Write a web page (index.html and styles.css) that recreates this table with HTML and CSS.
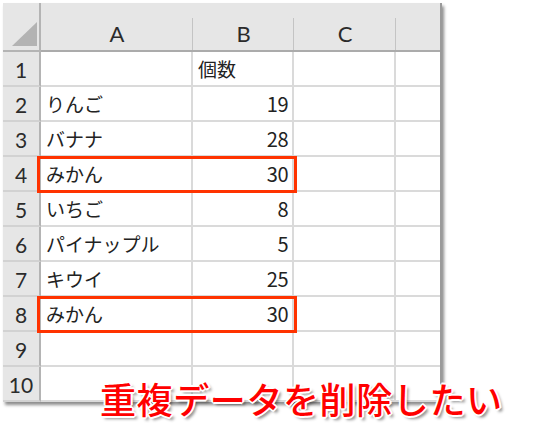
FILE: index.html
```html
<!DOCTYPE html>
<html lang="ja">
<head>
<meta charset="utf-8">
<link rel="stylesheet" href="styles.css">
</head>
<body>
<div class="page">
  <div class="sheet">
    <div class="corner"><span class="tri"></span></div>
    <div class="colh">A</div>
    <div class="colh">B</div>
    <div class="colh">C</div>
    <div class="colh last"></div>

    <div class="rowh">1</div><div class="cell"></div><div class="cell txt">個数</div><div class="cell"></div><div class="cell last"></div>
    <div class="rowh">2</div><div class="cell txt">りんご</div><div class="cell num">19</div><div class="cell"></div><div class="cell last"></div>
    <div class="rowh">3</div><div class="cell txt">バナナ</div><div class="cell num">28</div><div class="cell"></div><div class="cell last"></div>
    <div class="rowh">4</div><div class="cell txt">みかん</div><div class="cell num">30</div><div class="cell"></div><div class="cell last"></div>
    <div class="rowh">5</div><div class="cell txt">いちご</div><div class="cell num">8</div><div class="cell"></div><div class="cell last"></div>
    <div class="rowh">6</div><div class="cell txt">パイナップル</div><div class="cell num">5</div><div class="cell"></div><div class="cell last"></div>
    <div class="rowh">7</div><div class="cell txt">キウイ</div><div class="cell num">25</div><div class="cell"></div><div class="cell last"></div>
    <div class="rowh">8</div><div class="cell txt">みかん</div><div class="cell num">30</div><div class="cell"></div><div class="cell last"></div>
    <div class="rowh">9</div><div class="cell"></div><div class="cell"></div><div class="cell"></div><div class="cell last"></div>
    <div class="rowh">10</div><div class="cell"></div><div class="cell"></div><div class="cell"></div><div class="cell last"></div>

    <div class="mark mark-r4"></div>
    <div class="mark mark-r8"></div>
  </div>
  <div class="caption">重複データを削除したい</div>
</div>
</body>
</html>
```

FILE: styles.css
```css
html, body {
  margin: 0;
  padding: 0;
  background: #ffffff;
}

.page {
  position: relative;
  width: 540px;
  height: 430px;
  padding: 3px 0 0 3px;
  box-sizing: border-box;
}

.sheet {
  position: relative;
  display: grid;
  grid-template-columns: 38px 152px 101px 102px 44px;
  grid-template-rows: 49px repeat(10, 35px);
  width: 437px;
  background: #ffffff;
  box-shadow: 2px 3px 3px rgba(0, 0, 0, 0.45);
  border-right: 2px solid #9a9a9a;
  font-family: "Noto Sans CJK JP", "Noto Sans", sans-serif;
}

.corner {
  background: #e6e6e6;
  border-right: 2px solid #b4b4b4;
  border-bottom: 2px solid #b4b4b4;
  position: relative;
}

.tri {
  position: absolute;
  left: 9px;
  bottom: 4px;
  width: 0;
  height: 0;
  border-left: 25px solid transparent;
  border-bottom: 24px solid #b3b3b3;
}

.colh {
  background: #e6e6e6;
  border-bottom: 2px solid #ababab;
  font-family: "Lato", "Liberation Sans", sans-serif;
  font-size: 22px;
  color: #2b2b2b;
  display: flex;
  align-items: center;
  justify-content: center;
  padding-top: 14px;
  position: relative;
}

.colh::after {
  content: "";
  position: absolute;
  right: -1px;
  top: 15px;
  bottom: 0;
  width: 2px;
  background: #c4c4c4;
}

.colh.last::after {
  display: none;
}

.rowh {
  background: #e6e6e6;
  border-right: 2px solid #b4b4b4;
  border-bottom: 2px solid #d2d2d2;
  font-family: "Lato", "Liberation Sans", sans-serif;
  font-size: 21px;
  color: #2b2b2b;
  display: flex;
  align-items: center;
  justify-content: center;
  padding-top: 1px;
}

.cell {
  border-right: 2px solid #dadada;
  border-bottom: 2px solid #dadada;
  font-size: 19px;
  color: #222222;
  display: flex;
  align-items: center;
  white-space: nowrap;
  line-height: 1;
}

.cell.last {
  border-right: none;
}

.cell.txt {
  padding-left: 5px;
}

.cell.num {
  justify-content: flex-end;
  padding-right: 4px;
  font-size: 20px;
  letter-spacing: -0.5px;
}

.mark {
  position: absolute;
  left: 34px;
  width: 260px;
  height: 37px;
  box-sizing: border-box;
  border: 3px solid #ff3300;
}

.mark-r4 {
  top: 153px;
}

.mark-r8 {
  top: 293px;
}

.caption {
  position: absolute;
  left: 100px;
  top: 378px;
  font-family: "Noto Sans CJK JP", sans-serif;
  font-weight: 500;
  font-size: 36px;
  line-height: 40px;
  letter-spacing: 0.6px;
  color: #ff0000;
  white-space: nowrap;
  text-shadow:
    -1px -1px 0 #ffffff, 1px -1px 0 #ffffff, -1px 1px 0 #ffffff, 1px 1px 0 #ffffff,
    -2px 0 0 #ffffff, 2px 0 0 #ffffff, 0 -2px 0 #ffffff, 0 2px 0 #ffffff,
    3px 3px 3px rgba(0, 0, 0, 0.45);
}
```
